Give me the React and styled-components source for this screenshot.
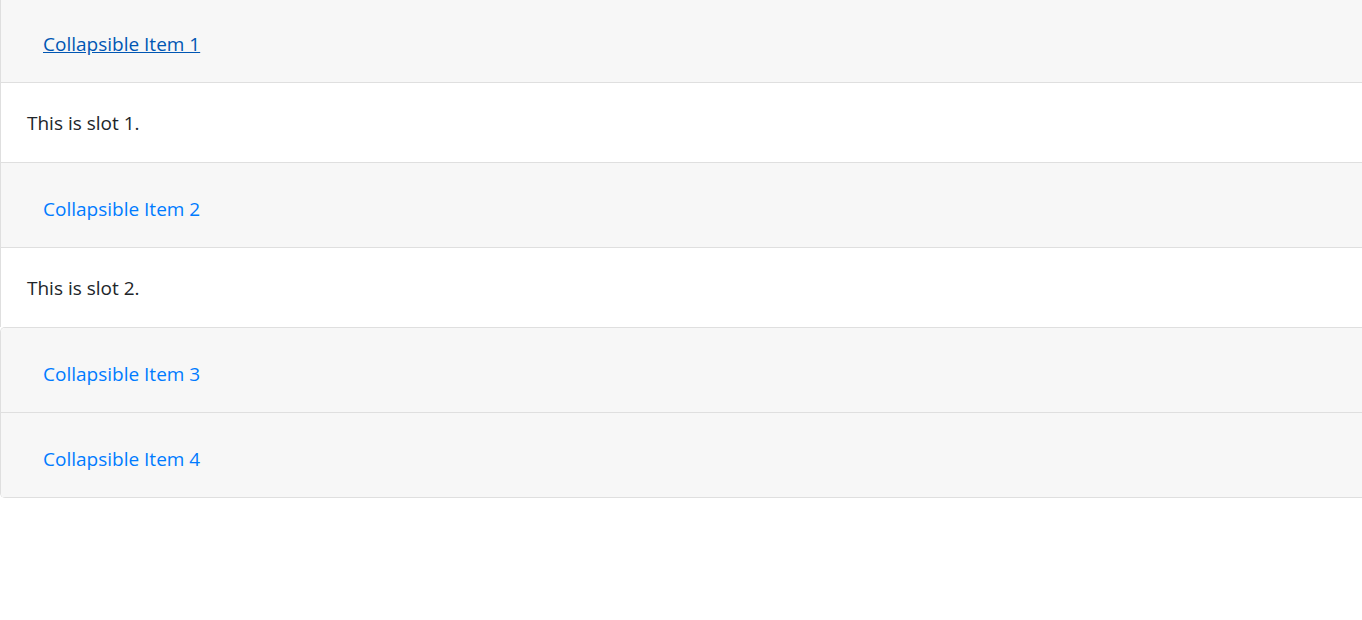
import React from "react";
import styled, { createGlobalStyle } from "styled-components";

const GlobalStyle = createGlobalStyle`
    html, body {
        margin: 0;
        padding: 0;
        background: #fff;
        overflow: hidden;
    }
    body {
        font-family: "Open Sans", "Noto Sans", sans-serif;
        font-size: 19px;
        color: #212529;
    }
`;

const Page = styled.div`
    overflow: hidden;
    height: 620px;
`;

const Accordion = styled.div`
    margin-top: -3px;
    margin-right: -8px;
    display: flex;
    flex-direction: column;
`;

const Card = styled.div`
    border-left: 1px solid #dfdfdf;
    border-right: 1px solid #dfdfdf;
    border-top: ${(p) => (p.joined ? "none" : "1px solid #dfdfdf")};
    border-top-left-radius: ${(p) => (p.roundTop ? "5px" : "0")};
    border-bottom-left-radius: ${(p) => (p.roundBottom ? "5px" : "0")};
    overflow: hidden;
`;

const CardHeader = styled.div`
    height: 53px;
    padding: 31px 0 0 42px;
    background: #f7f7f7;
    border-bottom: 1px solid #dfdfdf;
`;

const HeaderLink = styled.a`
    display: inline-block;
    line-height: 30px;
    color: ${(p) => (p.active ? "#0056b3" : "#007bff")};
    text-decoration: ${(p) => (p.active ? "underline" : "none")};
    cursor: pointer;
`;

const CardBody = styled.div`
    height: 30px;
    padding: 25px 25px 24px 26px;
    line-height: 30px;
    background: #fff;
`;

const items = [
    { title: "Collapsible Item 1", body: "This is slot 1.", active: true },
    { title: "Collapsible Item 2", body: "This is slot 2." },
    { title: "Collapsible Item 3", roundTop: true },
    { title: "Collapsible Item 4", joined: true, roundBottom: true },
];

export default function App() {
    return (
        <Page>
            <GlobalStyle />
            <Accordion>
                {items.map((item) => (
                    <Card
                        key={item.title}
                        joined={item.joined}
                        roundTop={item.roundTop}
                        roundBottom={item.roundBottom}
                    >
                        <CardHeader>
                            <HeaderLink active={item.active}>{item.title}</HeaderLink>
                        </CardHeader>
                        {item.body && <CardBody>{item.body}</CardBody>}
                    </Card>
                ))}
            </Accordion>
        </Page>
    );
}
